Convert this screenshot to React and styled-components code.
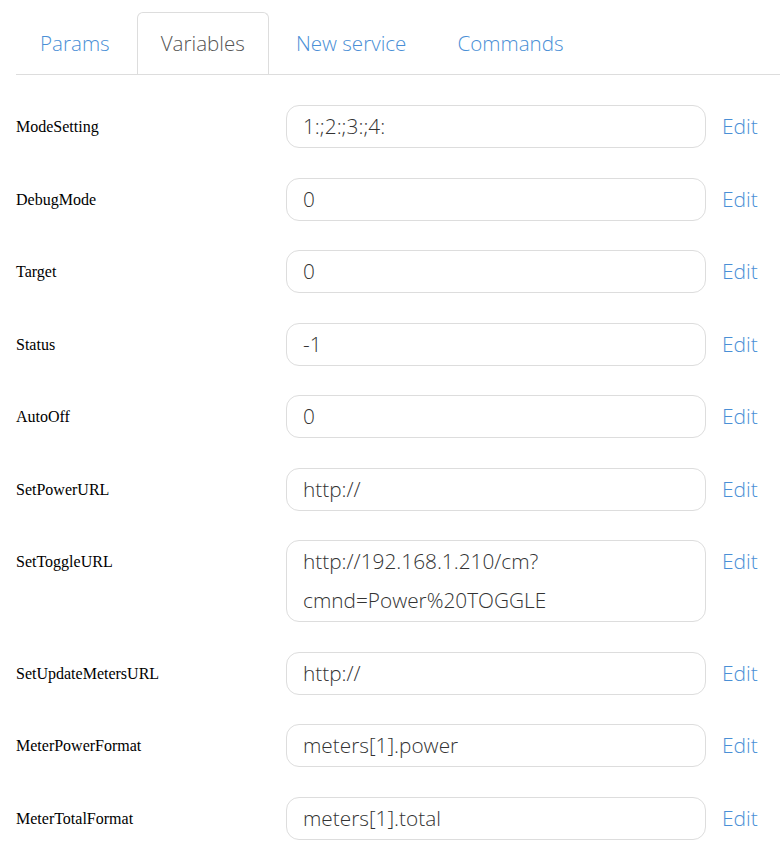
import React from 'react';
import styled, { createGlobalStyle } from 'styled-components';

const GlobalStyle = createGlobalStyle`
  body {
    margin: 0;
    background: #fff;
  }
`;

const Page = styled.div`
  padding: 12px 0 0 16px;
`;

const TabBar = styled.div`
  display: flex;
  gap: 3px;
  border-bottom: 1px solid #ddd;
  height: 62px;
`;

const Tab = styled.div`
  padding: 0 23px 2px;
  display: flex;
  align-items: center;
  font-family: 'Open Sans', sans-serif;
  font-weight: 300;
  font-size: 20.6px;
  color: ${(props) => (props.active ? '#555' : '#4a8fd6')};
  border: 1px solid ${(props) => (props.active ? '#ddd' : 'transparent')};
  border-bottom: none;
  border-radius: 6px 6px 0 0;
  background: #fff;
  margin-bottom: -1px;
  height: 62px;
  box-sizing: border-box;
`;

const List = styled.div`
  padding-top: 30px;
  display: flex;
  flex-direction: column;
  gap: 29.5px;
`;

const Row = styled.div`
  display: flex;
  align-items: flex-start;
`;

const Label = styled.div`
  width: 270px;
  font-family: 'Liberation Serif', serif;
  font-size: 16px;
  line-height: 43px;
  color: #000;
`;

const Field = styled.div`
  width: 420px;
  box-sizing: border-box;
  border: 1px solid #ddd;
  border-radius: 13px;
  padding: 1px 16px;
  font-family: 'Open Sans', sans-serif;
  font-weight: 300;
  font-size: 20.8px;
  line-height: 39px;
  color: #333;
  white-space: pre-wrap;
`;

const Edit = styled.a`
  margin-left: 16px;
  font-family: 'Open Sans', sans-serif;
  font-weight: 300;
  font-size: 21px;
  line-height: 43px;
  color: #4a8fd6;
  cursor: pointer;
`;

const tabs = ['Params', 'Variables', 'New service', 'Commands'];

const vars = [
  ['ModeSetting', '1:;2:;3:;4:'],
  ['DebugMode', '0'],
  ['Target', '0'],
  ['Status', '-1'],
  ['AutoOff', '0'],
  ['SetPowerURL', 'http://'],
  ['SetToggleURL', 'http://192.168.1.210/cm?\ncmnd=Power%20TOGGLE'],
  ['SetUpdateMetersURL', 'http://'],
  ['MeterPowerFormat', 'meters[1].power'],
  ['MeterTotalFormat', 'meters[1].total'],
];

const App = () => {
  return (
    <Page>
      <GlobalStyle />
      <TabBar>
        {tabs.map((t) => (
          <Tab key={t} active={t === 'Variables'}>
            {t}
          </Tab>
        ))}
      </TabBar>
      <List>
        {vars.map(([name, value]) => (
          <Row key={name}>
            <Label>{name}</Label>
            <Field>{value}</Field>
            <Edit>Edit</Edit>
          </Row>
        ))}
      </List>
    </Page>
  );
};

export default App;
